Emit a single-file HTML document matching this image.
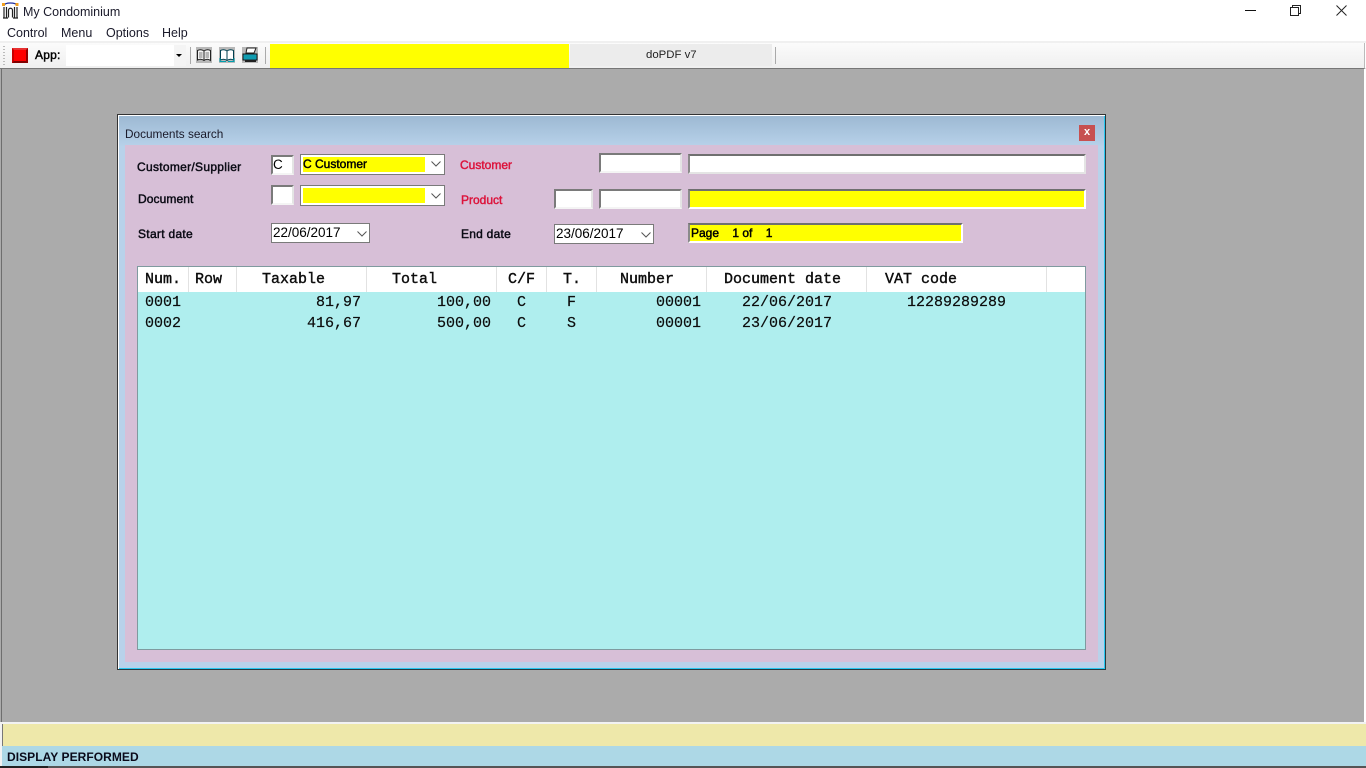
<!DOCTYPE html>
<html><head><meta charset="utf-8"><title>My Condominium</title>
<style>
html,body{margin:0;padding:0;width:1366px;height:768px;overflow:hidden;background:#fff}
body{position:relative;font-family:"Liberation Sans",sans-serif;color:#000}
.a{position:absolute;box-sizing:border-box}
.t{position:absolute;white-space:pre;line-height:16px}
.l{font-size:12px;-webkit-text-stroke:.45px currentColor;color:#0a0a14}
.m{font-size:12.5px;color:#1a1a2a}
.in{position:absolute;box-sizing:border-box;background:#fff;border:2px solid;border-color:#7a7a7a #e4e4e4 #f4f4f4 #7a7a7a}
.wide{border-width:2px;border-color:#6f6f6f #fff #fff #8a8a8a}
.y{background:#ff0}
.cb{position:absolute;box-sizing:border-box;background:#fff;border:1px solid #7a7a7a}
.c{font-family:"Liberation Mono",monospace;font-size:15px;line-height:16px;position:absolute;white-space:pre;color:#0c0c0c;-webkit-text-stroke:.2px #0c0c0c}
.h{-webkit-text-stroke:.4px #0c0c0c}
.sep{position:absolute;top:267px;width:1px;height:25px;background:#e2e2e2}
svg{position:absolute;overflow:visible}
</style></head><body>

<!-- title bar -->
<svg style="left:2px;top:2px" width="17" height="17" viewBox="0 0 17 17"><path d="M1.500 3.500C3.500 .2 13 .2 15.500 3.500" fill="none" stroke="#2030a0" stroke-width="1.300"/><rect x="0" y="1" width="3" height="3" fill="#f0a020"/><rect x="13.500" y="1" width="3" height="3" fill="#f0a020"/><path d="M2 5V15.500M4.500 5V15.500M12.500 5V15.500M15 5V15.500M1 16H6M11 16H16M6.500 15.500V8.500C6.500 5.500 10.500 5.500 10.500 8.500V15.500" fill="none" stroke="#222" stroke-width="1.200"/></svg>
<div class="t m" style="left:23px;top:4px">My Condominium</div>
<div class="a" style="left:1245px;top:10px;width:11px;height:1px;background:#111"></div>
<svg style="left:1290px;top:5px" width="11" height="11" viewBox="0 0 11 11"><path d="M.5 2.500H8.500V10.500H.5ZM2.500 2.500V.5H10.500V8.500H8.500" fill="none" stroke="#222"/></svg>
<svg style="left:1336px;top:5px" width="11" height="11" viewBox="0 0 11 11"><path d="M.5.5L10.500 10.500M10.500.5L.5 10.500" stroke="#222" fill="none"/></svg>

<!-- menu -->
<div class="t m" style="left:7px;top:25px">Control</div>
<div class="t m" style="left:61px;top:25px">Menu</div>
<div class="t m" style="left:106px;top:25px">Options</div>
<div class="t m" style="left:162px;top:25px">Help</div>

<!-- toolbar -->
<div class="a" style="left:0;top:41px;width:1366px;height:2px;background:#f0f0f0"></div>
<div class="a" style="left:0;top:43px;width:1365px;height:26px;background:linear-gradient(#fbfbfb,#efefef);border-right:1px solid #bbb"></div>
<div class="a" style="left:3px;top:46px;width:2px;height:20px;background:repeating-linear-gradient(#bbb 0 1px,transparent 1px 3px)"></div>
<div class="a" style="left:12px;top:48px;width:16px;height:15px;background:#f00;border:2px solid;border-color:#e83030 #900000 #800000 #c80000"></div>
<div class="t l" style="left:35px;top:47px;color:#000;letter-spacing:.2px">App:</div>
<div class="a" style="left:66px;top:45px;width:120px;height:21px;background:#fff"></div>
<div class="a" style="left:174px;top:45px;width:12px;height:21px;background:#f4f4f4"></div>
<div class="a" style="left:176px;top:54px;width:0;height:0;border:3px solid transparent;border-top:3px solid #000"></div>
<div class="a" style="left:190px;top:47px;width:1px;height:17px;background:#aaa"></div>
<div class="a" style="left:265px;top:47px;width:1px;height:17px;background:#aaa"></div>

<svg style="left:196px;top:47px" width="16" height="16" viewBox="0 0 16 16"><rect width="16" height="16" fill="#b8b8b8"/><path d="M8 4C6 2.500 3.500 2.500 1.500 3.500V13C3.500 12 6 12 8 13.500C10 12 12.500 12 14.500 13.500V3.500C12.500 2.500 10 2.500 8 4ZM8 4V13.500" fill="#f4f4f4" stroke="#222"/><path d="M3 6H6.500M3 8H6.500M3 10H6.500M9.500 6H13M9.500 8H13M9.500 10H13" stroke="#777"/></svg>
<svg style="left:219px;top:47px" width="16" height="16" viewBox="0 0 16 16"><rect width="16" height="16" fill="#b8b8b8"/><path d="M8 4C6 2.500 3.500 2.500 1.500 3.500V13C3.500 12 6 12 8 13.500C10 12 12.500 12 14.500 13V3.500C12.500 2.500 10 2.500 8 4ZM8 4V13.500" fill="#fff" stroke="#004050"/><path d="M1 11L1 14.500H7M15 11V14.500H9" stroke="#00a0b0" fill="none"/></svg>
<svg style="left:242px;top:47px" width="16" height="16" viewBox="0 0 16 16"><rect width="16" height="16" fill="#b8b8b8"/><path d="M5 1H14L12 6H4Z" fill="#fff" stroke="#222"/><path d="M1 7H15V13H1Z" fill="#20b0c8" stroke="#111"/><path d="M2 9H14M2 11H14" stroke="#008898"/><path d="M3 13H14V15H3Z" fill="#222"/></svg>

<div class="a" style="left:270px;top:44px;width:299px;height:24px;background:#ff0"></div>
<div class="a" style="left:570px;top:44px;width:202px;height:22px;background:#ececec"></div>
<div class="t" style="left:646px;top:47px;font-size:11.400px;color:#222">doPDF v7</div>
<div class="a" style="left:775px;top:47px;width:1px;height:17px;background:#aaa"></div>

<!-- MDI background -->
<div class="a" style="left:0;top:68px;width:1366px;height:654px;background:#ababab;border-top:1px solid #777;border-right:2px solid #fff"></div>
<div class="a" style="left:1px;top:69px;width:1px;height:653px;background:#6e6e6e"></div>

<!-- window -->
<div class="a" style="left:117px;top:114px;width:989px;height:556px;background:linear-gradient(#9cb8d2 0,#b8d2ea 32px,#b8d2ea 100%);border:1px solid;border-color:#333 #2a3a40 #2a3a40 #333;box-shadow:inset 1px 1px 0 #fff,inset -1px -1px 0 #28c8f0"></div>
<div class="t" style="left:125px;top:126px;font-size:11.800px;color:#1a1a2a">Documents search</div>
<div class="a" style="left:1079px;top:125px;width:16px;height:16px;background:#c75050"></div>
<div class="t" style="left:1084px;top:124px;font-size:11px;font-weight:bold;color:#fff">x</div>
<div class="a" style="left:125px;top:145px;width:973px;height:517px;background:#d7bfd7"></div>

<!-- form labels -->
<div class="t l" style="left:137px;top:159px;letter-spacing:.3px">Customer/Supplier</div>
<div class="t l" style="left:138px;top:191px;letter-spacing:.1px">Document</div>
<div class="t l" style="left:138px;top:226px;letter-spacing:.3px">Start date</div>
<div class="t l" style="left:461px;top:226px;letter-spacing:.25px">End date</div>
<div class="t l" style="left:460px;top:157px;color:#dc143c">Customer</div>
<div class="t l" style="left:461px;top:192px;color:#dc143c">Product</div>

<!-- row 1 -->
<div class="in" style="left:271px;top:155px;width:23px;height:20px"></div>
<div class="t" style="left:273px;top:157px;font-size:13.500px">C</div>
<div class="cb" style="left:300px;top:154px;width:145px;height:21px"></div>
<div class="a y" style="left:303px;top:157px;width:122px;height:15px"></div>
<div class="t l" style="left:303px;top:156px;color:#000">C Customer</div>
<svg style="left:431px;top:161px" width="10" height="6"><path d="M.5.5L5 5L9.500.5" fill="none" stroke="#555"/></svg>
<div class="in" style="left:599px;top:153px;width:83px;height:20px"></div>
<div class="in wide" style="left:688px;top:154px;width:398px;height:20px;border-bottom-color:#e4e4e4;border-right-color:#e4e4e4"></div>

<!-- row 2 -->
<div class="in" style="left:271px;top:185px;width:23px;height:20px"></div>
<div class="cb" style="left:300px;top:185px;width:145px;height:21px"></div>
<div class="a y" style="left:303px;top:188px;width:122px;height:15px"></div>
<svg style="left:431px;top:193px" width="10" height="6"><path d="M.5.5L5 5L9.500.5" fill="none" stroke="#555"/></svg>
<div class="in" style="left:554px;top:189px;width:39px;height:20px"></div>
<div class="in" style="left:599px;top:189px;width:83px;height:20px"></div>
<div class="in wide y" style="left:688px;top:189px;width:398px;height:20px"></div>

<!-- row 3 -->
<div class="cb" style="left:271px;top:223px;width:99px;height:20px"></div>
<div class="t" style="left:273px;top:225px;font-size:13.500px">22/06/2017</div>
<svg style="left:357px;top:231px" width="10" height="6"><path d="M.5.5L5 5L9.500.5" fill="none" stroke="#555"/></svg>
<div class="cb" style="left:554px;top:224px;width:100px;height:20px"></div>
<div class="t" style="left:556px;top:226px;font-size:13.500px">23/06/2017</div>
<svg style="left:641px;top:232px" width="10" height="6"><path d="M.5.5L5 5L9.500.5" fill="none" stroke="#555"/></svg>
<div class="in wide y" style="left:688px;top:223px;width:275px;height:20px"></div>
<div class="t l" style="left:691px;top:225px;color:#000">Page    1 of    1</div>

<!-- grid -->
<div class="a" style="left:137px;top:266px;width:949px;height:384px;background:#afeeee;border:1px solid #7f9a9f"></div>
<div class="a" style="left:138px;top:267px;width:947px;height:25px;background:#fff"></div>
<div class="sep" style="left:188px"></div><div class="sep" style="left:236px"></div><div class="sep" style="left:366px"></div><div class="sep" style="left:496px"></div><div class="sep" style="left:546px"></div><div class="sep" style="left:596px"></div><div class="sep" style="left:706px"></div><div class="sep" style="left:866px"></div><div class="sep" style="left:1046px"></div>

<div class="c h" style="left:145px;top:272px">Num.</div>
<div class="c h" style="left:195px;top:272px">Row</div>
<div class="c h" style="left:262px;top:272px">Taxable</div>
<div class="c h" style="left:392px;top:272px">Total</div>
<div class="c h" style="left:508px;top:272px">C/F</div>
<div class="c h" style="left:563px;top:272px">T.</div>
<div class="c h" style="left:620px;top:272px">Number</div>
<div class="c h" style="left:724px;top:272px">Document date</div>
<div class="c h" style="left:885px;top:272px">VAT code</div>

<div class="c" style="left:145px;top:295px">0001</div>
<div class="c" style="left:316px;top:295px">81,97</div>
<div class="c" style="left:437px;top:295px">100,00</div>
<div class="c" style="left:517px;top:295px">C</div>
<div class="c" style="left:567px;top:295px">F</div>
<div class="c" style="left:656px;top:295px">00001</div>
<div class="c" style="left:742px;top:295px">22/06/2017</div>
<div class="c" style="left:907px;top:295px">12289289289</div>

<div class="c" style="left:145px;top:316px">0002</div>
<div class="c" style="left:307px;top:316px">416,67</div>
<div class="c" style="left:437px;top:316px">500,00</div>
<div class="c" style="left:517px;top:316px">C</div>
<div class="c" style="left:567px;top:316px">S</div>
<div class="c" style="left:656px;top:316px">00001</div>
<div class="c" style="left:742px;top:316px">23/06/2017</div>

<!-- status -->
<div class="a" style="left:0;top:722px;width:1366px;height:2px;background:#f2f2f2"></div>
<div class="a" style="left:2px;top:724px;width:1364px;height:22px;background:#eee8aa;border-left:1px solid #777"></div>
<div class="a" style="left:0;top:724px;width:2px;height:42px;background:#f2f2f2"></div>
<div class="a" style="left:2px;top:746px;width:1364px;height:20px;background:#add8e6"></div>
<div class="t" style="left:7px;top:749px;font-size:12px;font-weight:bold;letter-spacing:.06px;color:#0a0a1a">DISPLAY PERFORMED</div>
<div class="a" style="left:0;top:766px;width:1366px;height:2px;background:#555"></div>
<div class="a" style="left:0;top:766px;width:48px;height:2px;background:#222"></div>
</body></html>
